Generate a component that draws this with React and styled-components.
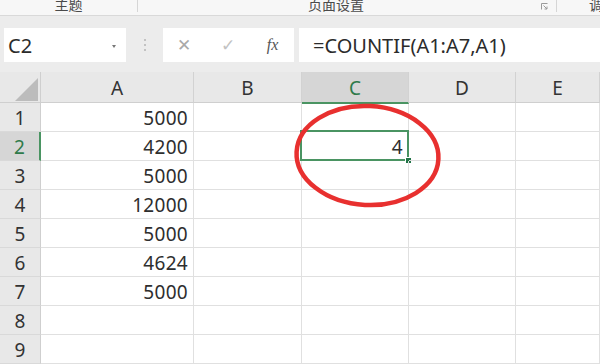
import React from 'react'
import styled, { createGlobalStyle } from 'styled-components'

const GlobalStyle = createGlobalStyle`
  html, body {
    margin: 0;
    padding: 0;
    background: #ffffff;
  }
  body {
    width: 600px;
    height: 364px;
    overflow: hidden;
    font-family: "Noto Sans", "Noto Sans CJK SC", sans-serif;
  }
`

const Page = styled.div`
  width: 600px;
  height: 364px;
  overflow: hidden;
  display: flex;
  flex-direction: column;
`

const Ribbon = styled.div`
  display: flex;
  height: 15px;
  flex-shrink: 0;
  background: #f7f7f7;
  border-bottom: 1px solid #d9d9d9;
  overflow: hidden;
  font-family: "Noto Sans CJK SC", "Noto Sans", sans-serif;
  font-size: 14px;
  color: #4a4a4a;
`

const RibbonGroup = styled.div`
  width: ${(p) => p.$w}px;
  flex-shrink: 0;
  display: flex;
  align-items: flex-start;
  border-right: ${(p) => (p.$last ? 'none' : '1px solid #d6d6d6')};
  height: 12px;
`

const RibbonLabel = styled.span`
  flex: 1;
  text-align: ${(p) => p.$align || 'center'};
  padding-left: ${(p) => p.$padL || 0}px;
  padding-right: ${(p) => p.$padR || 0}px;
  line-height: 15px;
  margin-top: -3px;
  white-space: nowrap;
`

const Launcher = styled.svg`
  width: 7px;
  height: 7px;
  margin: 3px 8px 0 0;
  flex-shrink: 0;
`

const FormulaBar = styled.div`
  height: 56px;
  flex-shrink: 0;
  background: #ececec;
  display: flex;
  align-items: flex-start;
  padding-top: 12px;
  box-sizing: border-box;
`

const NameBox = styled.div`
  margin-left: 4px;
  width: 122px;
  height: 34px;
  background: #ffffff;
  display: flex;
  align-items: center;
  justify-content: space-between;
  padding: 0 10px 0 4px;
  box-sizing: border-box;
  font-size: 20px;
  color: #2b2b2b;
`

const NameArrow = styled.span`
  width: 0;
  height: 0;
  border-left: 2.5px solid transparent;
  border-right: 2.5px solid transparent;
  border-top: 3px solid #777;
  margin-top: 2px;
`

const Grip = styled.div`
  width: 37px;
  height: 34px;
  display: flex;
  flex-direction: column;
  align-items: center;
  justify-content: center;
  gap: 3px;
`

const GripDot = styled.span`
  width: 2px;
  height: 2px;
  border-radius: 1px;
  background: #b5b5b5;
`

const ButtonBox = styled.div`
  width: 131px;
  height: 34px;
  background: #ffffff;
  display: grid;
  grid-template-columns: 42px 46px 43px;
  align-items: center;
  justify-items: center;
`

const ToolButton = styled.span`
  color: ${(p) => p.$color};
  font-size: ${(p) => p.$size}px;
  font-family: ${(p) => p.$serif ? '"Liberation Serif", serif' : '"DejaVu Sans", sans-serif'};
  font-style: ${(p) => (p.$serif ? 'italic' : 'normal')};
  line-height: 1;
`

const FormulaInput = styled.div`
  flex: 1;
  margin-left: 5px;
  height: 34px;
  background: #ffffff;
  display: flex;
  align-items: center;
  padding-left: 14px;
  font-size: 20px;
  color: #2b2b2b;
  white-space: nowrap;
`

const Sheet = styled.div`
  position: relative;
  flex: 1;
  display: grid;
  grid-template-columns: 41px 153px 108px 107px 107px 1fr;
  grid-template-rows: 31px repeat(9, 29px);
  overflow: hidden;
`

const ColHead = styled.div`
  background: ${(p) => (p.$active ? '#d6d6d6' : '#e8e8e8')};
  color: ${(p) => (p.$active ? '#2f7a4a' : '#333')};
  border-right: 1px solid #d2d2d2;
  border-bottom: ${(p) => (p.$active ? '2px solid #4a9462' : '1px solid #cfcfcf')};
  margin-bottom: ${(p) => (p.$active ? '-1px' : '0')};
  box-sizing: border-box;
  font-size: 19px;
  line-height: 27px;
  padding-top: 3px;
  text-align: center;
  position: relative;
  z-index: ${(p) => (p.$active ? 1 : 0)};
`

const Corner = styled.div`
  background: #e8e8e8;
  border-right: 1px solid #cfcfcf;
  border-bottom: 1px solid #cfcfcf;
  box-sizing: border-box;
  display: flex;
  align-items: flex-end;
  justify-content: flex-end;
  padding: 0 2px 1px 0;
`

const CornerTriangle = styled.span`
  width: 0;
  height: 0;
  border-left: 23px solid transparent;
  border-bottom: 23px solid #bcbcbc;
`

const RowHead = styled.div`
  background: ${(p) => (p.$active ? '#d6d6d6' : '#e8e8e8')};
  color: ${(p) => (p.$active ? '#2f7a4a' : '#333')};
  border-right: ${(p) => (p.$active ? '2px solid #4a9462' : '1px solid #cfcfcf')};
  border-bottom: 1px solid #d9d9d9;
  box-sizing: border-box;
  font-size: 19px;
  line-height: 26px;
  padding-top: 2px;
  text-align: center;
`

const Cell = styled.div`
  position: relative;
  border-right: 1px solid #e0e0e0;
  border-bottom: 1px solid #e0e0e0;
  box-sizing: border-box;
  font-size: 19px;
  line-height: 26px;
  padding: 2px 5px 0 0;
  text-align: right;
  color: #2e2e2e;
  letter-spacing: 0.3px;
`

const Selection = styled.span`
  position: absolute;
  top: -2px;
  left: -2px;
  right: -1px;
  bottom: -1px;
  border: 2px solid #4a9462;
  pointer-events: none;
`

const FillHandle = styled.span`
  position: absolute;
  right: -4px;
  bottom: -4px;
  width: 5px;
  height: 5px;
  background: #217346;
  border: 1px solid #ffffff;
`

const Annotation = styled.svg`
  position: absolute;
  left: 0;
  top: 0;
  width: 600px;
  height: 292px;
  pointer-events: none;
  z-index: 5;
`

const columns = ['A', 'B', 'C', 'D', 'E']
const valuesA = ['5000', '4200', '5000', '12000', '5000', '4624', '5000', '', '']

export default function App() {
  return (
    <Page>
      <GlobalStyle />
      <Ribbon>
        <RibbonGroup $w={137}>
          <RibbonLabel>主题</RibbonLabel>
        </RibbonGroup>
        <RibbonGroup $w={418}>
          <RibbonLabel $padR={7}>页面设置</RibbonLabel>
          <Launcher viewBox="0 0 7 7">
            <path d="M0.5 0.5 H6.5 M0.5 0.5 V6.5" stroke="#9a9a9a" strokeWidth="1" fill="none" />
            <path d="M2.5 2.5 L6 6 M6 3.5 V6 H3.5" stroke="#9a9a9a" strokeWidth="1" fill="none" />
          </Launcher>
        </RibbonGroup>
        <RibbonGroup $w={45} $last>
          <RibbonLabel $align="left" $padL={32}>调</RibbonLabel>
        </RibbonGroup>
      </Ribbon>

      <FormulaBar>
        <NameBox>
          C2
          <NameArrow />
        </NameBox>
        <Grip>
          <GripDot />
          <GripDot />
          <GripDot />
        </Grip>
        <ButtonBox>
          <ToolButton $color="#a9a9a9" $size={17}>✕</ToolButton>
          <ToolButton $color="#c2c2c2" $size={17}>✓</ToolButton>
          <ToolButton $color="#555" $size={16} $serif>fx</ToolButton>
        </ButtonBox>
        <FormulaInput>=COUNTIF(A1:A7,A1)</FormulaInput>
      </FormulaBar>

      <Sheet>
        <Corner>
          <CornerTriangle />
        </Corner>
        {columns.map((c) => (
          <ColHead key={c} $active={c === 'C'}>
            {c}
          </ColHead>
        ))}
        {valuesA.map((v, i) => (
          <React.Fragment key={i}>
            <RowHead $active={i === 1}>{i + 1}</RowHead>
            <Cell>{v}</Cell>
            <Cell />
            <Cell>
              {i === 1 && (
                <>
                  4
                  <Selection />
                  <FillHandle />
                </>
              )}
            </Cell>
            <Cell />
            <Cell />
          </React.Fragment>
        ))}
        <Annotation viewBox="0 0 600 292">
          <ellipse
            cx="367.5"
            cy="83.5"
            rx="71"
            ry="49.5"
            fill="none"
            stroke="#e8302f"
            strokeWidth="4.5"
            transform="rotate(3 367.5 83.5)"
          />
        </Annotation>
      </Sheet>
    </Page>
  )
}
